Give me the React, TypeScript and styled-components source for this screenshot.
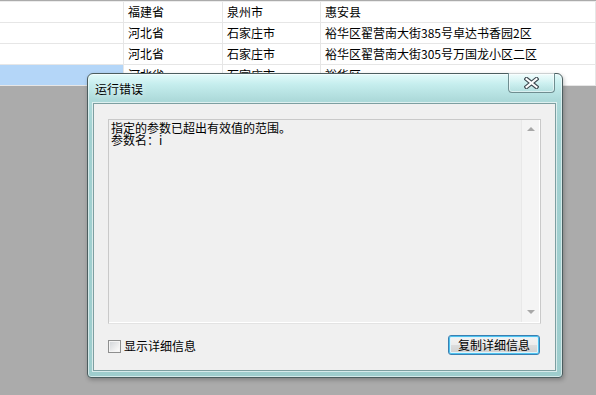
import React from "react";
import styled, { createGlobalStyle } from "styled-components";

const GlobalStyle = createGlobalStyle`
  html, body {
    margin: 0;
    padding: 0;
  }
  body {
    font-family: "Noto Sans CJK SC", "Liberation Sans", sans-serif;
    font-size: 12px;
    color: #000;
  }
`;

const Page = styled.div`
  position: relative;
  width: 596px;
  height: 395px;
  overflow: hidden;
  display: flex;
  flex-direction: column;
  background: #ababab;
`;

const Grid = styled.div`
  margin-top: 1px;
  border-top: 1px solid #ececec;
  background: #fff;
`;

const Row = styled.div`
  display: flex;
  height: 20px;
  border-bottom: 1px solid #e6e6e6;
`;

const Cell = styled.div<{ $w?: number; $selected?: boolean }>`
  flex: ${(p) => (p.$w ? `0 0 ${p.$w}px` : "1")};
  box-sizing: border-box;
  padding-left: 4px;
  border-right: 1px solid #e6e6e6;
  line-height: 20px;
  white-space: nowrap;
  overflow: hidden;
  background: ${(p) => (p.$selected ? "#b4d6f8" : "transparent")};
`;

const Backdrop = styled.div`
  flex: 1;
  background: #ababab;
`;

const Dialog = styled.div`
  position: absolute;
  left: 87px;
  top: 73px;
  width: 476px;
  height: 305px;
  box-sizing: border-box;
  border: 1px solid #4b5d5f;
  border-radius: 6px 6px 4px 4px;
  background: linear-gradient(
    to bottom,
    #e4fbfb 0px,
    #c6eeee 10px,
    #addada 26px,
    #a3d1d1 60px,
    #9ecdcd 100%
  );
  box-shadow: inset 0 0 0 1px rgba(255, 255, 255, 0.55),
    1px 2px 4px rgba(0, 0, 0, 0.25);
  display: flex;
  flex-direction: column;
`;

const TitleBar = styled.div`
  height: 29px;
  display: flex;
  justify-content: space-between;
  align-items: flex-start;
`;

const Title = styled.div`
  padding-left: 7px;
  line-height: 29px;
  font-size: 12px;
  color: #000;
  text-shadow: 0 0 6px rgba(255, 255, 255, 0.9);
`;

const CloseButton = styled.div`
  margin-top: -1px;
  margin-right: 7px;
  width: 47px;
  height: 20px;
  box-sizing: border-box;
  border: 1px solid #6f8d90;
  border-top: none;
  border-radius: 0 0 4px 4px;
  background: linear-gradient(
    to bottom,
    rgba(255, 255, 255, 0.45),
    rgba(255, 255, 255, 0.12) 50%,
    rgba(160, 205, 205, 0.2)
  );
  box-shadow: inset 0 0 0 1px rgba(255, 255, 255, 0.5);
  display: flex;
  align-items: center;
  justify-content: center;
`;

const Client = styled.div`
  flex: 1;
  display: flex;
  padding: 0 6px 6px 5px;
`;

const Panel = styled.div`
  flex: 1;
  display: flex;
  flex-direction: column;
  padding: 15px 14px 15px 14px;
  background: #f0f0f0;
  border: 1px solid #7d9fa1;
  box-shadow: 0 0 0 1px rgba(255, 255, 255, 0.6);
`;

const Message = styled.div`
  flex: 1;
  display: flex;
  border: 1px solid #c9c9c9;
  border-bottom-color: #e3e3e3;
  background: #f0f0f0;
  box-shadow: inset -1px -1px 0 #ffffff;
`;

const MessageText = styled.div`
  flex: 1;
  padding: 2px 2px;
  line-height: 12px;
  font-size: 12px;
  white-space: pre;
`;

const ScrollBar = styled.div`
  width: 17px;
  margin: 0 1px 1px 0;
  background: #f4f4f4;
  border-left: 1px solid #e8e8e8;
  display: flex;
  flex-direction: column;
  justify-content: space-between;
  align-items: center;
  padding: 7px 0 8px;
`;

const Arrow = styled.div<{ $down?: boolean }>`
  width: 0;
  height: 0;
  border-left: 4px solid transparent;
  border-right: 4px solid transparent;
  ${(p) =>
    p.$down
      ? "border-top: 4px solid #a8a8a8;"
      : "border-bottom: 4px solid #a8a8a8;"}
`;

const Footer = styled.div`
  margin-top: 11px;
  height: 20px;
  display: flex;
  align-items: center;
  justify-content: space-between;
`;

const CheckLabel = styled.label`
  display: flex;
  align-items: center;
  gap: 3px;
  padding-top: 2px;
  line-height: 12px;
`;

const CheckBox = styled.span`
  width: 13px;
  height: 13px;
  box-sizing: border-box;
  border: 1px solid #8e8f8f;
  background: linear-gradient(135deg, #cfd3d7 0%, #f2f2f2 70%, #ffffff 100%);
  box-shadow: inset 0 0 0 1px #f4f4f4;
`;

const Button = styled.div`
  width: 92px;
  height: 20px;
  margin-right: 1px;
  box-sizing: border-box;
  border: 1px solid #3c7fb1;
  border-radius: 3px;
  background: linear-gradient(
    to bottom,
    #f4f4f4 0%,
    #ececec 48%,
    #dcdcdc 52%,
    #cfcfcf 100%
  );
  box-shadow: inset 0 0 0 1px #4cc2ef, inset 0 0 0 2px #dff4fc;
  display: flex;
  align-items: center;
  justify-content: center;
  line-height: 12px;
`;

const rows = [
  ["福建省", "泉州市", "惠安县"],
  ["河北省", "石家庄市", "裕华区翟营南大街385号卓达书香园2区"],
  ["河北省", "石家庄市", "裕华区翟营南大街305号万国龙小区二区"],
  ["河北省", "石家庄市", "裕华区"],
];

function CloseIcon() {
  return (
    <svg width="15" height="12" viewBox="0 0 15 12">
      <path
        d="M2.5 2 L12.5 10 M12.5 2 L2.5 10"
        stroke="#3f4b52"
        strokeWidth="4.2"
        strokeLinecap="square"
      />
      <path
        d="M2.5 2 L12.5 10 M12.5 2 L2.5 10"
        stroke="#ffffff"
        strokeWidth="2"
        strokeLinecap="square"
      />
    </svg>
  );
}

export default function App() {
  return (
    <>
      <GlobalStyle />
      <Page>
        <Grid>
          {rows.map((r, i) => (
            <Row key={i}>
              <Cell $w={124} $selected={i === 3} />
              <Cell $w={99}>{r[0]}</Cell>
              <Cell $w={98}>{r[1]}</Cell>
              <Cell>{r[2]}</Cell>
            </Row>
          ))}
        </Grid>
        <Backdrop />
        <Dialog>
          <TitleBar>
            <Title>运行错误</Title>
            <CloseButton>
              <CloseIcon />
            </CloseButton>
          </TitleBar>
          <Client>
            <Panel>
              <Message>
                <MessageText>
                  {"指定的参数已超出有效值的范围。\n参数名：i"}
                </MessageText>
                <ScrollBar>
                  <Arrow />
                  <Arrow $down />
                </ScrollBar>
              </Message>
              <Footer>
                <CheckLabel>
                  <CheckBox />
                  显示详细信息
                </CheckLabel>
                <Button>复制详细信息</Button>
              </Footer>
            </Panel>
          </Client>
        </Dialog>
      </Page>
    </>
  );
}
